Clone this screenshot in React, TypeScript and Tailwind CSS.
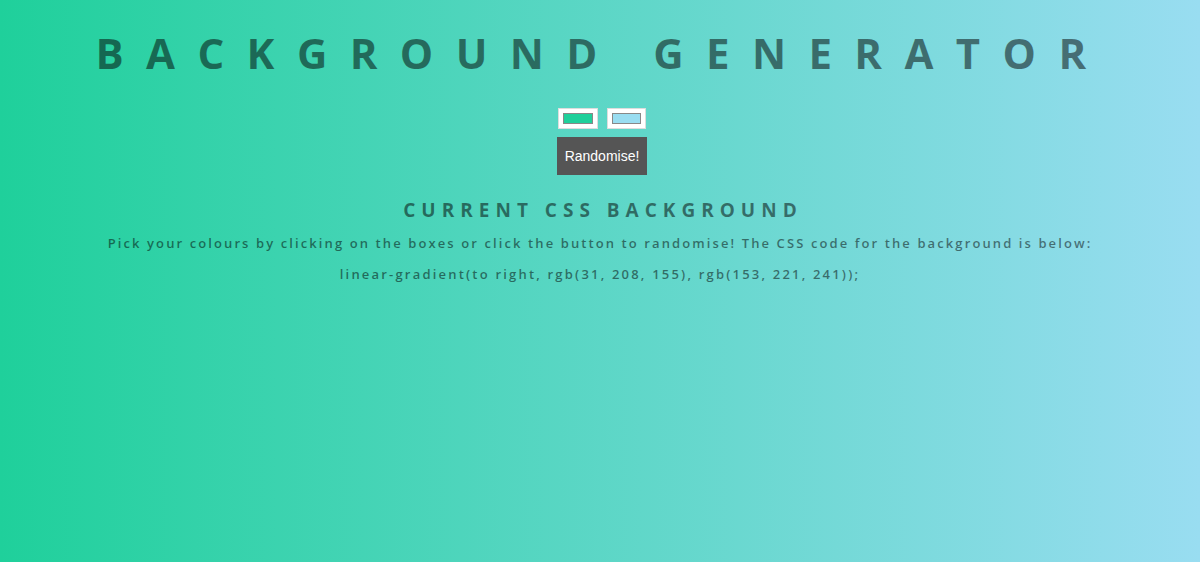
export default function App() {
  const color1 = "rgb(31, 208, 155)";
  const color2 = "rgb(153, 221, 241)";
  const css = `linear-gradient(to right, ${color1}, ${color2});`;

  return (
    <div
      className="min-h-[562px] w-full flex flex-col items-center text-black/50 font-['Open_Sans',sans-serif]"
      style={{ background: css.replace(";", "") }}
    >
      <h1 className="mt-[29px] text-[42px] leading-[48px] font-bold tracking-[22.4px] pl-[4px] uppercase">
        Background Generator
      </h1>

      <div className="mt-[31px] ml-[4px] flex gap-[9px]">
        <div className="w-[40px] h-[21px] bg-white border border-[#ddd] p-[4px]">
          <div className="w-full h-full bg-[#1fd09b] border border-[#888]" />
        </div>
        <div className="w-[39px] h-[21px] bg-white border border-[#ddd] p-[4px]">
          <div className="w-full h-full bg-[#99ddf1] border border-[#888]" />
        </div>
      </div>

      <button
        type="button"
        className="mt-[8px] ml-[4px] w-[90px] h-[38px] bg-[#555] text-white text-[14px] font-['Liberation_Sans',sans-serif]"
      >
        Randomise!
      </button>

      <h3 className="mt-[23px] text-[19px] leading-[24px] font-bold tracking-[6px] pl-[6px] uppercase">
        Current CSS Background
      </h3>

      <p className="mt-[12px] text-[13px] leading-[18px] font-semibold tracking-[2.1px]">
        Pick your colours by clicking on the boxes or click the button to randomise! The CSS code for the background is below:
      </p>

      <p className="mt-[13px] text-[13px] leading-[18px] font-semibold tracking-[2.2px]">{css}</p>
    </div>
  );
}
